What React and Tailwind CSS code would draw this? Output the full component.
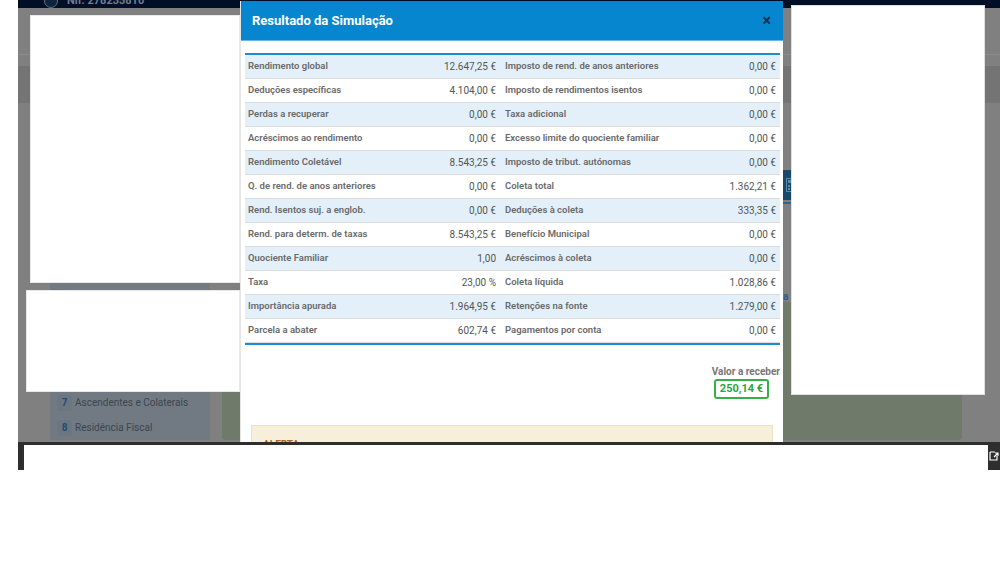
const rows = [
  ["Rendimento global", "12.647,25 €", "Imposto de rend. de anos anteriores", "0,00 €"],
  ["Deduções específicas", "4.104,00 €", "Imposto de rendimentos isentos", "0,00 €"],
  ["Perdas a recuperar", "0,00 €", "Taxa adicional", "0,00 €"],
  ["Acréscimos ao rendimento", "0,00 €", "Excesso limite do quociente familiar", "0,00 €"],
  ["Rendimento Coletável", "8.543,25 €", "Imposto de tribut. autónomas", "0,00 €"],
  ["Q. de rend. de anos anteriores", "0,00 €", "Coleta total", "1.362,21 €"],
  ["Rend. Isentos suj. a englob.", "0,00 €", "Deduções à coleta", "333,35 €"],
  ["Rend. para determ. de taxas", "8.543,25 €", "Benefício Municipal", "0,00 €"],
  ["Quociente Familiar", "1,00", "Acréscimos à coleta", "0,00 €"],
  ["Taxa", "23,00 %", "Coleta líquida", "1.028,86 €"],
  ["Importância apurada", "1.964,95 €", "Retenções na fonte", "1.279,00 €"],
  ["Parcela a abater", "602,74 €", "Pagamentos por conta", "0,00 €"],
];

function Row({ r, i }) {
  return (
    <div
      className={
        "flex h-[24px] items-center border-b border-[#dcdcdc] " +
        (i % 2 === 0 ? "bg-[#e3f0fa]" : "bg-white")
      }
    >
      <div className="flex w-[255px] items-center justify-between pl-[3px] pr-[4px]">
        <span className="text-[9.5px] font-semibold text-[#6a6a6a]">{r[0]}</span>
        <span className="text-[10px] text-[#555]">{r[1]}</span>
      </div>
      <div className="flex flex-1 items-center justify-between pl-[5px] pr-[4px]">
        <span className="text-[9.5px] font-semibold text-[#6a6a6a]">{r[2]}</span>
        <span className="text-[10px] text-[#555]">{r[3]}</span>
      </div>
    </div>
  );
}

export default function App() {
  return (
    <div className="relative h-[563px] w-[1000px] overflow-hidden bg-white font-['Roboto',sans-serif]">
      {/* page screenshot */}
      <div className="relative ml-[18px] flex h-[470px] w-[982px] flex-col overflow-hidden">
        {/* top navy bar */}
        <div className="h-[8px] overflow-hidden bg-[#000f26]">
          <div className="-mt-[6px] flex items-center gap-[9px] pl-[26px]">
            <div className="h-[14px] w-[14px] rounded-full border border-[#5d6d84] bg-[#0d2440]" />
            <span className="text-[11px] font-bold leading-[12px] text-[#6f7d92]">Nif: 278233810</span>
          </div>
        </div>
        {/* dimmed page body */}
        <div className="flex h-[434px] flex-col bg-[#808080]">
          <div className="mt-[46px] h-px bg-[#8c8c8c]" />
          <div className="mt-[11px] h-[37px] bg-[#747474]" />
          <div className="ml-[765px] mt-[67px] flex h-[30px] w-[40px] items-center bg-[#17496b] pl-[3px]">
            <svg width="10" height="14" viewBox="0 0 10 14">
              <rect x="0.5" y="0.5" width="9" height="13" fill="none" stroke="#5f87a6" />
              <rect x="2" y="2" width="6" height="3" fill="#5f87a6" />
              <rect x="2" y="7" width="2" height="2" fill="#5f87a6" />
              <rect x="6" y="7" width="2" height="2" fill="#5f87a6" />
              <rect x="2" y="10" width="2" height="2" fill="#5f87a6" />
              <rect x="6" y="10" width="2" height="2" fill="#5f87a6" />
            </svg>
          </div>
          <div className="ml-[765px] mt-[2px] h-[2px] w-[40px] bg-[#2d6690]" />
          <div className="flex">
            <div className="ml-[32px] mt-[79px] flex h-[157px] w-[160px] flex-col justify-end bg-[#717a82] px-[7px]">
              {[
                ["7", "Ascendentes e Colaterais"],
                ["8", "Residência Fiscal"],
              ].map(([n, t]) => (
                <div key={n} className="flex h-[25px] items-center gap-[3px]">
                  <span className="flex h-[16px] w-[15px] items-center justify-center rounded-[2px] bg-[#6c7680] text-[10px] font-bold text-[#1f4d78]">
                    {n}
                  </span>
                  <span className="text-[10px] text-[#3c4651]">{t}</span>
                </div>
              ))}
            </div>
            <div className="ml-[12px] flex flex-col">
              <div className="ml-[561px] mt-[88px] h-[10px] text-[10px] font-bold leading-[10px] text-[#2a5d8a]">a</div>
              <div className="h-[138px] w-[740px] rounded-b-[4px] bg-[#6f7a6b]" />
            </div>
          </div>
        </div>
        {/* bottom dark strip */}
        <div className="flex h-[28px] border-t-[3px] border-[#2e2e2e] bg-[#2e2e2e]">
          <div className="ml-[6px] h-full w-[964px] bg-white" />
          <div className="flex flex-1 items-start justify-center pt-[5px]">
            <svg width="10" height="12" viewBox="0 0 10 12">
              <path d="M1 2 H6 M1 2 V10 H8 V6" fill="none" stroke="#fff" strokeWidth="1.2" />
              <path d="M5 7 L9 3 M6 3 H9 V6" fill="none" stroke="#fff" strokeWidth="1.2" />
            </svg>
          </div>
        </div>
      </div>

      {/* modal */}
      <div className="absolute left-[240px] top-[1px] h-[441px] w-[543px] overflow-hidden border-l border-[#e6e6e6] bg-white">
        <div className="flex h-[40px] items-center justify-between border-b border-[#6fb3e0] bg-[#0586cf] pl-[11px] pr-[12px]">
          <span className="text-[13px] font-bold text-white">Resultado da Simulação</span>
          <span className="text-[16px] font-bold leading-none text-[#15314d]">×</span>
        </div>
        <div className="pl-[4px] pr-[3px] pt-[12px]">
          <div className="border-t-2 border-[#1d8bd1]">
            {rows.map((r, i) => (
              <Row key={i} r={r} i={i} />
            ))}
          </div>
          <div className="h-[2px] bg-[#1d8bd1]" />
          <div className="mt-[22px] flex flex-col items-end">
            <span className="text-[10px] font-bold leading-[10px] text-[#777]">Valor a receber</span>
            <div className="mr-[11px] mt-[2px] flex h-[20px] w-[55px] items-center justify-center rounded-[3px] border-2 border-[#35b049] text-[11px] font-bold text-[#2ca43f]">
              250,14 €
            </div>
          </div>
          <div className="ml-[6px] mr-[7px] mt-[26px] h-[40px] border border-[#f0e1c4] bg-[#f7efda] pl-[11px] pt-[5px]">
            <span className="text-[10px] font-bold leading-[12px] text-[#b0641c]">ALERTA</span>
          </div>
        </div>
      </div>

      {/* white redaction boxes */}
      <div className="absolute left-[30px] top-[15px] h-[268px] w-[210px] border border-[#e8e8e8] bg-white" />
      <div className="absolute left-[26px] top-[290px] h-[102px] w-[214px] border border-[#e8e8e8] bg-white" />
      <div className="absolute left-[791px] top-[5px] h-[390px] w-[194px] border border-[#e0e0e0] bg-white" />
    </div>
  );
}
